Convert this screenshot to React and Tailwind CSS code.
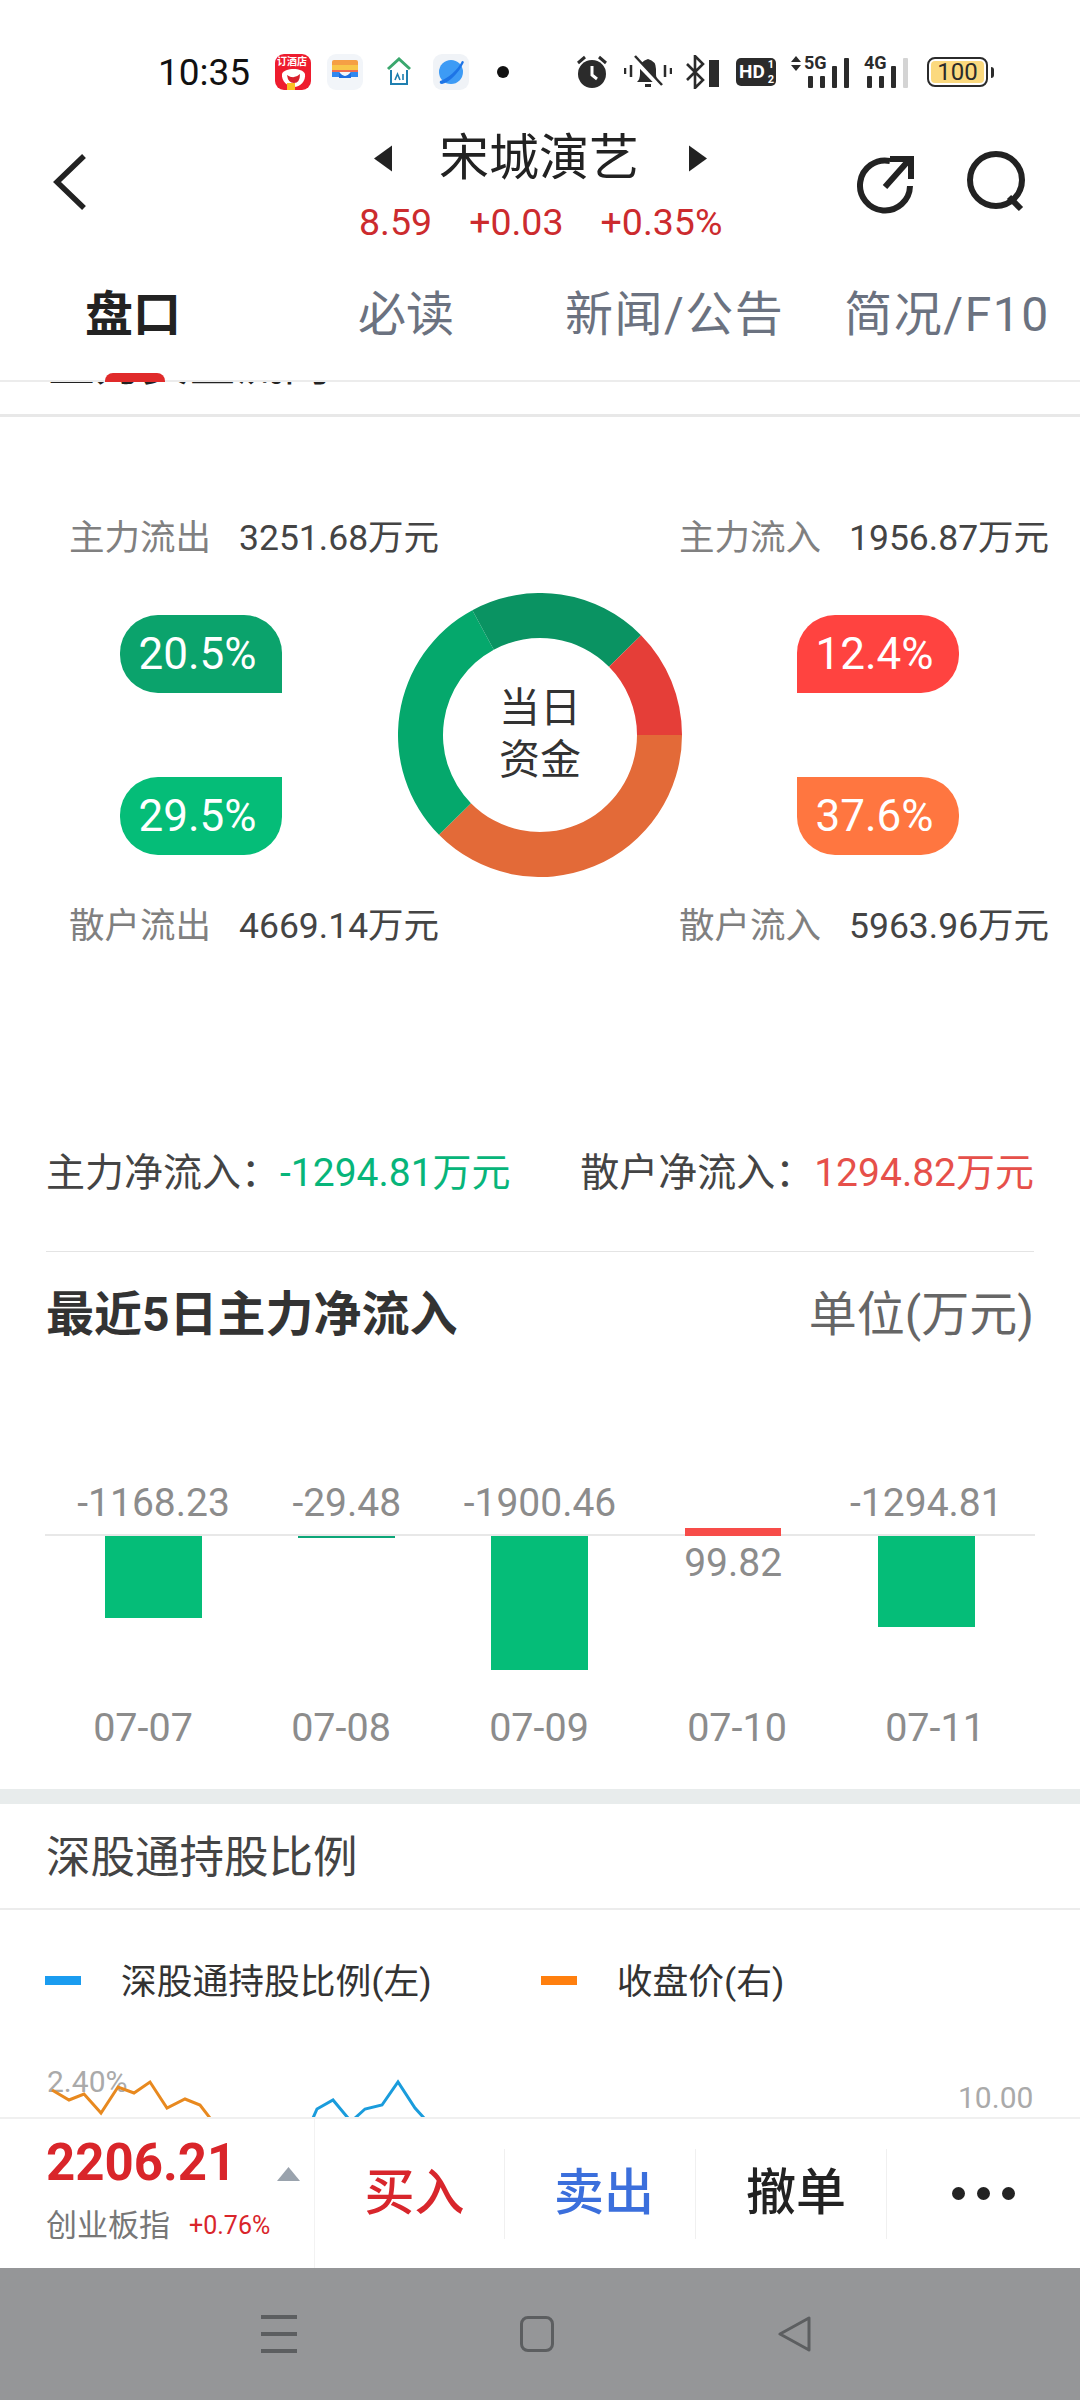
const slices = [
  { pct: 37.6, color: "#e36a38" },
  { pct: 29.5, color: "#05a86c" },
  { pct: 20.5, color: "#0a9362" },
  { pct: 12.4, color: "#e53e38" },
];

function arcPath(start, end) {
  // angles are in percent, clockwise from 3 o'clock
  const c = 142;
  const R = 142;
  const r = 97;
  const a = (start / 100) * Math.PI * 2;
  const b = (end / 100) * Math.PI * 2;
  const large = end - start > 50 ? 1 : 0;
  const p = (rad, t) => `${(c + rad * Math.cos(t)).toFixed(2)} ${(c + rad * Math.sin(t)).toFixed(2)}`;
  return `M${p(R, a)}A${R} ${R} 0 ${large} 1 ${p(R, b)}L${p(r, b)}A${r} ${r} 0 ${large} 0 ${p(r, a)}Z`;
}

function Donut() {
  let at = 0;
  return (
    <div className="relative w-[284px] h-[284px] mt-[74px] shrink-0">
      <svg width="284" height="284" viewBox="0 0 284 284">
        {slices.map((s) => {
          const d = arcPath(at, at + s.pct);
          at += s.pct;
          return <path key={s.color} d={d} fill={s.color} />;
        })}
      </svg>
      <div className="absolute inset-0 pb-[2px] flex flex-col items-center justify-center text-[41px] leading-[52px] text-[#333]">
        <span>当日</span>
        <span>资金</span>
      </div>
    </div>
  );
}

function FlowLabel({ label, value, className = "" }) {
  return (
    <div className={`flex items-center h-[40px] text-[35.5px] whitespace-nowrap ${className}`}>
      <span className="text-[#808080]">{label}</span>
      <span className="ml-[28px] text-[#444]">{value}</span>
    </div>
  );
}

function Pill({ text, className }) {
  return (
    <div className={`w-[162px] h-[78px] flex items-center justify-center pr-[7px] text-white text-[44px] ${className}`}>
      {text}
    </div>
  );
}

function StatusBar() {
  return (
    <div className="h-[110px] shrink-0 flex items-center pl-[158px] pt-[34px]">
      <span className="text-[37px] text-[#111] w-[94px] leading-none">10:35</span>
      <div className="relative ml-[23px] w-[36px] h-[36px] rounded-[9px] bg-[#ee1c2e] overflow-hidden">
        <span className="absolute top-[2px] left-[2px] text-[10px] leading-[11px] font-bold text-white whitespace-nowrap">订酒店</span>
        <svg className="absolute inset-0" viewBox="0 0 36 36" width="36" height="36">
          <path d="M7 20c2-6 20-7 23 0 1 7-5 13-11 13S6 27 7 20z" fill="#fff" />
          <path d="M12 21q7 5 13-1q0 9-6 9t-7-8z" fill="#d9202d" />
          <rect x="12" y="29" width="8" height="7" fill="#fbbf24" />
        </svg>
      </div>
      <svg className="ml-[16px]" width="36" height="36" viewBox="0 0 36 36">
        <rect width="36" height="36" rx="9" fill="#f2f5f9" />
        <path d="M5 8q0-2 2-2h22q2 0 2 2v3H5z" fill="#f59f45" />
        <rect x="5" y="11" width="26" height="5" fill="#f8c64a" />
        <rect x="5" y="16" width="26" height="2" fill="#ef6a50" />
        <path d="M5 18h7q6 8 12 0h7v5H5z" fill="#2f88f0" />
        <path d="M12 18q6 8 12 0v6H12z" fill="#1d6fe0" />
      </svg>
      <svg className="ml-[23px]" width="26" height="30" viewBox="0 0 26 30">
        <path d="M2 12 13 2l11 10" fill="none" stroke="#3aa76d" strokeWidth="3" />
        <path d="M5 13v14h16V13" fill="none" stroke="#1f7fb0" strokeWidth="2" />
        <path d="M9 23l2.5-6 2.5 6M17 17v6" fill="none" stroke="#1f7fb0" strokeWidth="1.6" />
      </svg>
      <svg className="ml-[21px]" width="36" height="36" viewBox="0 0 36 36">
        <rect width="36" height="36" rx="9" fill="#f0f3f7" />
        <circle cx="18" cy="18" r="12" fill="#3d9bf5" />
        <path d="M7 27C14 25 25 16 29 7q3 0 1 3C26 18 17 28 9 30q-3 0-2-3z" fill="#1d74e6" />
      </svg>
      <div className="ml-[28px] w-[12px] h-[12px] rounded-full bg-[#111]" />
      <svg className="ml-[68px]" width="30" height="34" viewBox="0 0 30 34">
        <circle cx="15" cy="19" r="14" fill="#2b2b2b" />
        <path d="M15 11v9l5 4" fill="none" stroke="#fff" strokeWidth="3" />
        <path d="M1 8l7-6M29 8l-7-6" stroke="#2b2b2b" strokeWidth="3" />
      </svg>
      <svg className="ml-[17px]" width="48" height="34" viewBox="0 0 48 34">
        <path d="M13 27q3-3 3-8v-5q0-8 8-10q8 2 8 10v5q0 5 3 8z" fill="#2b2b2b" />
        <rect x="21" y="29" width="6" height="3" fill="#2b2b2b" />
        <path d="M9 3l27 28" stroke="#fff" strokeWidth="5" />
        <path d="M11 1l27 29" stroke="#2b2b2b" strokeWidth="2.5" />
        <path d="M1 13v6M7 10v12M41 10v12M47 13v6" stroke="#2b2b2b" strokeWidth="2.5" />
      </svg>
      <svg className="ml-[13px]" width="34" height="34" viewBox="0 0 34 34">
        <path d="M2 9l16 16-8 8V1l8 8L2 25" fill="none" stroke="#2b2b2b" strokeWidth="2.6" />
        <path d="M24 5h10v27H24z" fill="#2b2b2b" />
      </svg>
      <div className="ml-[17px] relative w-[40px] h-[28px] rounded-[5px] bg-[#2b2b2b] text-white font-bold text-[19px] leading-[28px] pl-[3px] overflow-hidden">
        HD
        <span className="absolute right-[2px] top-[0px] text-[11px] leading-[13px]">1</span>
        <span className="absolute right-[2px] bottom-[0px] text-[11px] leading-[13px]">2</span>
      </div>
      <div className="ml-[14px] relative w-[74px] h-[32px]">
        <svg className="absolute left-0 top-0" width="12" height="16" viewBox="0 0 12 16">
          <path d="M6 0l5 6H1zM6 15 1 9h10z" fill="#2b2b2b" />
        </svg>
        <span className="absolute left-[14px] -top-[2px] text-[18px] font-bold leading-[18px] text-[#2b2b2b]">5G</span>
        <div className="absolute left-[18px] bottom-0 flex items-end gap-[7px]">
          <div className="w-[5px] h-[12px] bg-[#2b2b2b] rounded-[1px]" />
          <div className="w-[5px] h-[12px] bg-[#2b2b2b] rounded-[1px]" />
          <div className="w-[5px] h-[22px] bg-[#2b2b2b] rounded-[1px]" />
          <div className="w-[5px] h-[30px] bg-[#2b2b2b] rounded-[1px]" />
        </div>
      </div>
      <div className="relative w-[46px] h-[32px]">
        <span className="absolute left-0 -top-[2px] text-[18px] font-bold leading-[18px] text-[#2b2b2b]">4G</span>
        <div className="absolute left-[3px] bottom-0 flex items-end gap-[7px]">
          <div className="w-[5px] h-[12px] bg-[#2b2b2b] rounded-[1px]" />
          <div className="w-[5px] h-[12px] bg-[#2b2b2b] rounded-[1px]" />
          <div className="w-[5px] h-[22px] bg-[#2b2b2b] rounded-[1px]" />
          <div className="w-[5px] h-[30px] bg-[#d4d4d4] rounded-[1px]" />
        </div>
      </div>
      <div className="ml-[17px] w-[61px] h-[30px] rounded-[8px] border-2 border-[#2b2b2b] p-[2px]">
        <div className="w-full h-full rounded-[4px] bg-[#fbd97e] flex items-center justify-center text-[24px] leading-none text-[#2b2b2b]">100</div>
      </div>
      <div className="ml-[3px] w-[3px] h-[11px] rounded-r bg-[#2b2b2b]" />
    </div>
  );
}

function Header() {
  return (
    <div className="h-[140px] shrink-0 flex items-start pl-[50px]">
      <svg className="mt-[40px] shrink-0" width="38" height="64" viewBox="0 0 38 64">
        <path d="M34 6 7 32l27 26" fill="none" stroke="#222" strokeWidth="5.5" />
      </svg>
      <div className="ml-[286px] w-[333px] shrink-0 flex flex-col pt-[15px]">
        <div className="flex items-center h-[72px] pb-[6px]">
          <svg width="20" height="29" viewBox="0 0 20 29"><path d="M20 0v29L0 14.5z" fill="#222" /></svg>
          <span className="ml-[47px] text-[50px] leading-none text-[#222] whitespace-nowrap">宋城演艺</span>
          <svg className="ml-[50px]" width="20" height="29" viewBox="0 0 20 29"><path d="M0 0v29l20-14.5z" fill="#222" /></svg>
        </div>
        <div className="-ml-[15px] flex items-center text-[37.5px] leading-[50px] text-[#cc2b2e] whitespace-nowrap">
          <span>8.59</span>
          <span className="ml-[37px]">+0.03</span>
          <span className="ml-[37px]">+0.35%</span>
        </div>
      </div>
      <svg className="ml-[149px] mt-[44px] shrink-0" width="60" height="60" viewBox="0 0 60 60">
        <path d="M34 7A25 25 0 1 0 54 32" fill="none" stroke="#222" strokeWidth="6" />
        <path d="M29 33 53 6M34 5h21v20" fill="none" stroke="#222" strokeWidth="6" />
      </svg>
      <svg className="ml-[50px] mt-[40px] shrink-0" width="62" height="62" viewBox="0 0 62 62">
        <circle cx="30" cy="30" r="26" fill="none" stroke="#222" strokeWidth="6" />
        <path d="M43 47l12 12" stroke="#222" strokeWidth="6" />
      </svg>
    </div>
  );
}

function Tabs() {
  return (
    <div className="relative h-[132px] shrink-0 border-b-2 border-[#ececec] whitespace-nowrap">
      <div className="flex items-center h-[130px] text-[48px] leading-none text-[#6b7280]">
        <span className="ml-[85px] font-bold text-[#222]">盘口</span>
        <span className="ml-[177px]">必读</span>
        <span className="ml-[111px] tracking-[1.5px]">新闻/公告</span>
        <span className="ml-[60px] tracking-[1.5px]">简况/F10</span>
      </div>
      <div className="absolute left-[105px] top-[123px] w-[60px] h-[9px] rounded-t-[8px] bg-[#e02a2a]" />
    </div>
  );
}

const barRows = [
  { value: "-1168.23", h: "h-[82px]", color: "bg-[#05bd78]" },
  { value: "-29.48", h: "h-[2px]", color: "bg-[#0ca678]" },
  { value: "-1900.46", h: "h-[134px]", color: "bg-[#05bd78]" },
  { value: "", h: "", color: "" },
  { value: "-1294.81", h: "h-[91px]", color: "bg-[#05bd78]" },
];
const dates = ["07-07", "07-08", "07-09", "07-10", "07-11"];

function BarChart() {
  return (
    <div>
      <div className="mt-[136px] ml-[11px] w-[966px] grid grid-cols-5 h-[44px] text-[39px] leading-[44px] text-[#8c8c8c] text-center">
        {barRows.map((b, i) => (
          <span key={i}>{b.value}</span>
        ))}
      </div>
      <div className="mt-[9px] -mx-[1px] h-[2px] bg-[#e8e8e8]" />
      <div className="ml-[11px] w-[966px] grid grid-cols-5 h-[170px]">
        {barRows.map((b, i) => (
          <div key={i} className="flex flex-col items-center">
            {b.value ? (
              <div className={`w-[97px] ${b.h} ${b.color}`} />
            ) : (
              <>
                <div className="w-[96px] h-[8px] -mt-[8px] bg-[#f74c49]" />
                <span className="mt-[5px] text-[39px] leading-[44px] text-[#8c8c8c]">99.82</span>
              </>
            )}
          </div>
        ))}
      </div>
      <div className="-ml-[2px] w-[990px] grid grid-cols-5 h-[44px] text-[39.5px] leading-[44px] text-[#8c8c8c] text-center">
        {dates.map((d) => (
          <span key={d}>{d}</span>
        ))}
      </div>
    </div>
  );
}

function Content() {
  return (
    <div className="flex-1 overflow-hidden">
      {/* heading that has scrolled under the tabs */}
      <div className="-mt-[41px] h-[76px] border-b-[3px] border-[#e8e8e8] pl-[48px] text-[47px] leading-[46px] text-[#222] whitespace-nowrap">
        主力资金流向
      </div>

      <div className="flex pt-[102px]">
        <div className="w-[398px] shrink-0 flex flex-col pl-[69px]">
          <FlowLabel label="主力流出" value="3251.68万元" />
          <Pill text="20.5%" className="mt-[56px] ml-[51px] bg-[#0ba36c] rounded-l-[38px] rounded-tr-[38px]" />
          <Pill text="29.5%" className="mt-[84px] ml-[51px] bg-[#05bd78] rounded-l-[38px] rounded-br-[38px]" />
          <FlowLabel label="散户流出" value="4669.14万元" className="mt-[52px]" />
        </div>
        <Donut />
        <div className="flex-1 flex flex-col -ml-[3px]">
          <FlowLabel label="主力流入" value="1956.87万元" />
          <Pill text="12.4%" className="mt-[56px] ml-[118px] bg-[#ff4340] rounded-r-[38px] rounded-tl-[38px]" />
          <Pill text="37.6%" className="mt-[84px] ml-[118px] bg-[#ff7640] rounded-r-[38px] rounded-bl-[38px]" />
          <FlowLabel label="散户流入" value="5963.96万元" className="mt-[52px]" />
        </div>
      </div>

      <div className="px-[46px]">
        <div className="mt-[201px] h-[50px] flex items-center justify-between text-[39px] whitespace-nowrap text-[#444]">
          <div>
            主力净流入：<span className="text-[#07b57a]">-1294.81万元</span>
          </div>
          <div>
            散户净流入：<span className="text-[#e6504a]">1294.82万元</span>
          </div>
        </div>
        <div className="mt-[53px] h-px bg-[#e4e4e4]" />
        <div className="mt-[33px] h-[60px] flex items-center justify-between">
          <span className="text-[48px] font-bold text-[#333]">最近5日主力净流入</span>
          <span className="text-[48px] text-[#666]">单位(万元)</span>
        </div>
        <BarChart />
      </div>

      <div className="mt-[39px] h-[15px] bg-[#e8ecec]" />
      <div className="h-[106px] border-b-2 border-[#ececec] pl-[46px] pt-[4px] flex items-center text-[44.5px] text-[#444]">深股通持股比例</div>

      <div className="mt-[48px] h-[50px] flex items-center pl-[45px] text-[35.75px] text-[#333] whitespace-nowrap">
        <div className="w-[36px] h-[9px] bg-[#1a9cf0] -mt-[6px]" />
        <span className="ml-[40px]">深股通持股比例(左)</span>
        <div className="ml-[109px] w-[36px] h-[9px] bg-[#ff7f0e] -mt-[6px]" />
        <span className="ml-[40px]">收盘价(右)</span>
      </div>

      <svg className="block mt-[50px]" width="1080" height="60" viewBox="0 2060 1080 60">
        <text x="47" y="2094" fontSize="30" fill="#aaa">2.40%</text>
        <text x="958" y="2110" fontSize="30" fill="#aaa">10.00</text>
        <polyline
          points="52,2092 69,2102 84,2096 101,2115 118,2089 134,2095 150,2084 167,2110 185,2101 200,2107 210,2120"
          fill="none"
          stroke="#e8891f"
          strokeWidth="3"
        />
        <polyline points="313,2120 317,2111 333,2102 348,2120" fill="none" stroke="#1a9cdc" strokeWidth="3" />
        <polyline points="355,2120 365,2111 382,2107 398,2084 415,2110 424,2120" fill="none" stroke="#1a9cdc" strokeWidth="3" />
      </svg>
    </div>
  );
}

function BottomBar() {
  return (
    <div className="h-[151px] shrink-0 border-t-2 border-[#f0f0f0] flex bg-white">
      <div className="w-[315px] shrink-0 border-r border-[#f2f2f2] pl-[46px] pt-[14px]">
        <div className="flex items-start h-[60px]">
          <span className="w-[182px] text-[51px] font-bold leading-[60px] text-[#d9252a] whitespace-nowrap">2206.21</span>
          <svg className="ml-[49px] mt-[34px]" width="23" height="14" viewBox="0 0 23 14">
            <path d="M11.5 0 23 14H0z" fill="#9aa3ad" />
          </svg>
        </div>
        <div className="mt-[13px] h-[40px] flex items-center whitespace-nowrap">
          <span className="text-[31px] text-[#777]">创业板指</span>
          <span className="ml-[19px] text-[25px] text-[#d9252a]">+0.76%</span>
        </div>
      </div>
      <div className="flex-1 flex items-center text-[50px] font-medium">
        <div className="w-[190px] h-[90px] border-r border-[#f0f0f0] flex items-center justify-center pl-[10px] text-[#d8262c]">买入</div>
        <div className="w-[191px] h-[90px] border-r border-[#f0f0f0] flex items-center justify-center pl-[8px] text-[#3b6fdc]">卖出</div>
        <div className="w-[191px] h-[90px] border-r border-[#f0f0f0] flex items-center justify-center pl-[10px] text-[#222]">撤单</div>
        <div className="flex-1 flex items-center justify-center gap-[12px]">
          <div className="w-[13px] h-[13px] rounded-full bg-[#222]" />
          <div className="w-[13px] h-[13px] rounded-full bg-[#222]" />
          <div className="w-[13px] h-[13px] rounded-full bg-[#222]" />
        </div>
      </div>
    </div>
  );
}

function NavBar() {
  return (
    <div className="h-[132px] shrink-0 bg-[#959698] flex items-center pl-[261px]">
      <div className="w-[36px] h-[38px] flex flex-col justify-between">
        <div className="h-[4px] bg-[#5c5e60]" />
        <div className="h-[4px] bg-[#5c5e60]" />
        <div className="h-[4px] bg-[#5c5e60]" />
      </div>
      <div className="ml-[223px] w-[34px] h-[36px] rounded-[8px] border-[3px] border-[#5c5e60]" />
      <svg className="ml-[224px]" width="34" height="36" viewBox="0 0 34 36">
        <path d="M31 2v32L2 18z" fill="none" stroke="#5c5e60" strokeWidth="3" strokeLinejoin="round" />
      </svg>
    </div>
  );
}

export default function App() {
  return (
    <div className="w-[1080px] h-[2400px] bg-white flex flex-col overflow-hidden [font-family:Roboto,'Noto_Sans_CJK_SC',sans-serif]">
      <StatusBar />
      <Header />
      <Tabs />
      <Content />
      <BottomBar />
      <NavBar />
    </div>
  );
}
